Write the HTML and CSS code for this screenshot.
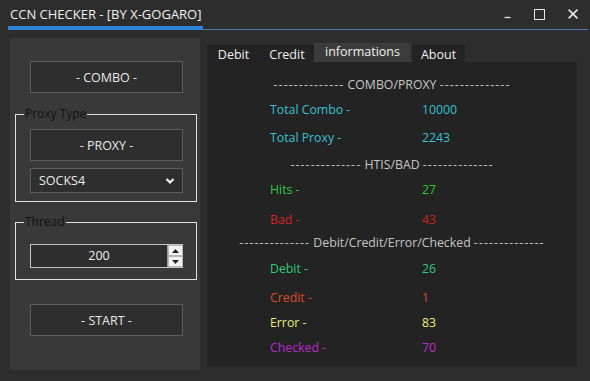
FILE: index.html
```html
<!DOCTYPE html>
<html>
<head>
<meta charset="utf-8">
<link rel="stylesheet" href="styles.css">
</head>
<body>
<div class="window">
  <div class="titlebar">
    <div class="title">CCN CHECKER - [BY X-GOGARO]</div>
    <div class="controls">
      <svg class="ctl" width="7" height="12" viewBox="0 0 7 12"><path d="M0.5 8.5h6" stroke="#e6e6e6" stroke-width="1.3"/></svg>
      <svg class="ctl" width="11" height="11" viewBox="0 0 11 11"><rect x="0.5" y="0.5" width="10" height="10" fill="none" stroke="#e6e6e6" stroke-width="1"/></svg>
      <svg class="ctl" width="10" height="10" viewBox="0 0 10 10"><path d="M0.6 0.6L9.4 9.4M9.4 0.6L0.6 9.4" stroke="#e6e6e6" stroke-width="1.6"/></svg>
    </div>
  </div>
  <div class="main">
    <div class="side">
      <div class="btn combo">- COMBO -</div>
      <fieldset class="group g1">
        <legend>Proxy Type</legend>
        <div class="btn">- PROXY -</div>
        <div class="select">
          <span>SOCKS4</span>
          <svg width="10" height="8" viewBox="0 0 10 8"><path d="M1.5 2L5 5.5L8.5 2" fill="none" stroke="#f2f2f2" stroke-width="2.2"/></svg>
        </div>
      </fieldset>
      <fieldset class="group g2">
        <legend>Thread</legend>
        <div class="num">
          <span class="numval">200</span>
          <div class="spin">
            <div class="sp"><svg width="7" height="4" viewBox="0 0 7 4"><path d="M0 4L3.5 0L7 4Z" fill="#222"/></svg></div>
            <div class="sp"><svg width="7" height="4" viewBox="0 0 7 4"><path d="M0 0L3.5 4L7 0Z" fill="#222"/></svg></div>
          </div>
        </div>
      </fieldset>
      <div class="btn start">- START -</div>
    </div>
    <div class="tabs">
      <div class="tabstrip">
        <div class="tab t-debit">Debit</div>
        <div class="tab t-credit">Credit</div>
        <div class="tab active">informations</div>
        <div class="tab t-about">About</div>
      </div>
      <div class="panel">
        <div class="sep"><span class="dash">--------------</span> COMBO/PROXY <span class="dash">--------------</span></div>
        <div class="lbl cyan">Total Combo -</div><div class="val cyan">10000</div>
        <div class="lbl cyan">Total Proxy -</div><div class="val cyan">2243</div>
        <div class="sep"><span class="dash">--------------</span> HTIS/BAD <span class="dash">--------------</span></div>
        <div class="lbl green">Hits -</div><div class="val green">27</div>
        <div class="lbl red">Bad -</div><div class="val red">43</div>
        <div class="sep"><span class="dash">--------------</span> Debit/Credit/Error/Checked <span class="dash">--------------</span></div>
        <div class="lbl mint">Debit -</div><div class="val mint">26</div>
        <div class="lbl orange">Credit -</div><div class="val orange">1</div>
        <div class="lbl yellow">Error -</div><div class="val yellow">83</div>
        <div class="lbl magenta">Checked -</div><div class="val magenta">70</div>
      </div>
    </div>
  </div>
</div>
</body>
</html>
```
FILE: styles.css
```css
* { box-sizing: border-box; }
html, body { margin: 0; padding: 0; }
body {
  width: 590px;
  height: 381px;
  background: #2d2d2d;
  font-family: "Open Sans", "Noto Sans", sans-serif;
  font-size: 12px;
  color: #e4e4e4;
  overflow: hidden;
}
.window { width: 590px; height: 381px; }
.titlebar { display: flex; height: 30px; }
.title {
  margin-left: 8px;
  width: 195px;
  height: 30px;
  padding: 2px 0 0 2px;
  line-height: 24px;
  font-size: 13px;
  color: #f0f0f0;
  border-bottom: 4px solid #2f86d8;
  white-space: nowrap;
}
.controls {
  flex: 1;
  height: 30px;
  margin-right: 2px;
  border-bottom: 1px solid #4b7db0;
  display: flex;
  justify-content: flex-end;
  align-items: flex-start;
  padding: 9px 10px 0 0;
  gap: 23px;
}
.ctl { display: block; }
.main { display: flex; padding: 8px 0 0 10px; }
.side {
  width: 190px;
  height: 332px;
  background: #393939;
  display: flex;
  flex-direction: column;
  align-items: flex-start;
  padding: 23px 0 0 5px;
}
.btn {
  width: 153px;
  height: 32px;
  background: #2e2e2e;
  border: 1px solid #5e5e5e;
  display: flex;
  align-items: center;
  justify-content: center;
  font-size: 12.5px;
  color: #e8e8e8;
}
.combo, .start { margin-left: 15px; }
.start { margin-top: 24px; }
.group {
  margin: 0;
  width: 182px;
  border: 1px solid #e2e2e2;
  padding: 0 14px;
  min-width: 0;
}
.group legend {
  padding: 0 1px;
  margin-left: -6px;
  font-size: 12px;
  line-height: 14px;
  color: #111111;
}
.g1 { margin-top: 14px; padding-top: 8px; padding-bottom: 8px; }
.g2 { margin-top: 13px; padding-top: 15px; padding-bottom: 11px; }
.select {
  margin-top: 7px;
  width: 153px;
  height: 25px;
  background: #2e2e2e;
  border: 1px solid #5e5e5e;
  display: flex;
  align-items: center;
  justify-content: space-between;
  padding: 0 7px 0 8px;
  font-size: 12.5px;
  color: #ececec;
}
.select svg { display: block; }
.num {
  width: 153px;
  height: 24px;
  background: #2e2e2e;
  border: 1px solid #c4c4c4;
  border-right: none;
  display: flex;
}
.numval {
  flex: 1;
  text-align: center;
  line-height: 22px;
  font-size: 12.5px;
  color: #f0f0f0;
}
.spin {
  width: 16px;
  display: flex;
  flex-direction: column;
  background: #f2f2f2;
  border-left: 1px solid #9a9a9a;
}
.sp {
  flex: 1;
  display: flex;
  align-items: center;
  justify-content: center;
  border: 1px solid #b8b8b8;
}
.sp svg { display: block; }
.tabs {
  margin-left: 7px;
  margin-top: 5px;
  width: 370px;
  display: flex;
  flex-direction: column;
}
.tabstrip { display: flex; align-items: flex-end; height: 19px; }
.tab {
  height: 17px;
  background: #232323;
  color: #f0f0f0;
  font-size: 12.5px;
  line-height: 19px;
  text-align: center;
}
.t-debit { width: 53px; }
.t-credit { width: 54px; }
.active {
  width: 97px;
  height: 19px;
  line-height: 17px;
  background: #3b3b3b;
  margin-right: 1px;
}
.t-about { width: 53px; }
.panel {
  height: 305px;
  background: #232323;
  display: grid;
  grid-template-columns: 63px 152px 1fr;
  grid-template-rows: 25px 28px 27px 25px 30px 23px 26px 29px 25px 25px 20px;
  padding-top: 13px;
  align-items: start;
}
.panel > div { line-height: 20px; white-space: nowrap; font-size: 12.3px; }
.sep { grid-column: 1 / 4; text-align: center; color: #c6c6c6; padding-left: 0; }
.dash { letter-spacing: 1.1px; }
.lbl { grid-column: 2; }
.val { grid-column: 3; }
.cyan { color: #36c0d2; }
.green { color: #2ccc3a; }
.red { color: #cc2424; }
.mint { color: #34cc78; }
.orange { color: #dc4a26; }
.yellow { color: #ecec7a; }
.magenta { color: #bc28cc; }
```
